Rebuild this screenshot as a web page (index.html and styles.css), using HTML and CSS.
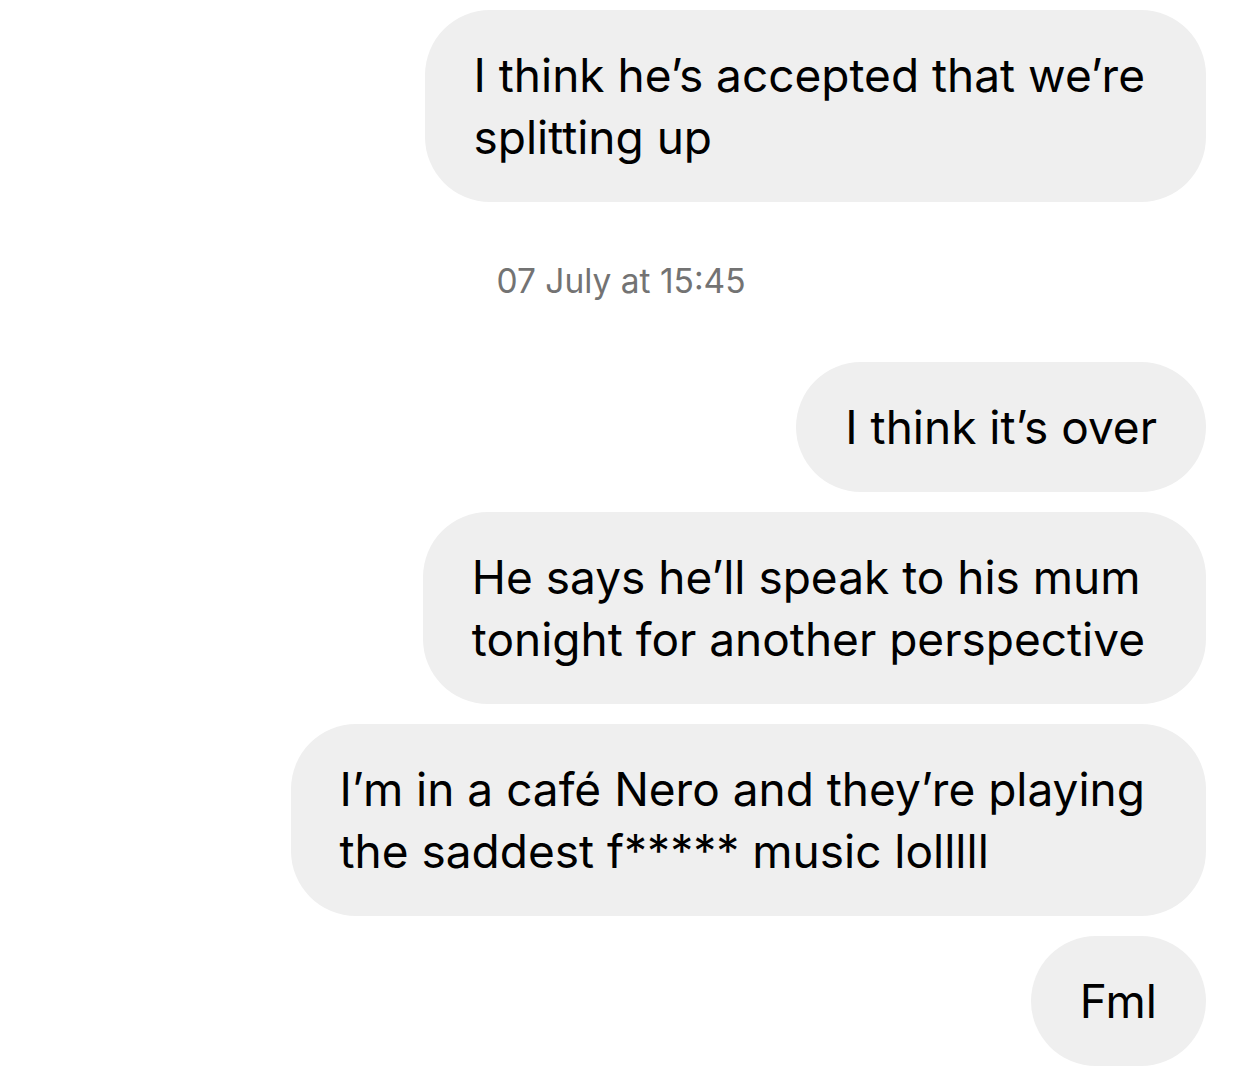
FILE: index.html
```html
<!DOCTYPE html>
<html lang="en">
  <head>
    <meta charset="UTF-8" />
    <meta name="viewport" content="width=device-width, initial-scale=1.0" />
    <title>Messages</title>
    <link rel="stylesheet" href="styles.css">
  </head>
  <body>
    <div class="thread">
      <div class="bubble multi">I think he’s accepted that we’re<br />splitting up</div>

      <p class="stamp">07 July at 15:45</p>

      <div class="bubble">I think it’s over</div>
      <div class="bubble multi">He says he’ll speak to his mum<br />tonight for another perspective</div>
      <div class="bubble multi">I’m in a café Nero and they’re playing<br />the saddest f***** music lolllll</div>
      <div class="bubble">Fml</div>
    </div>
  </body>
</html>
```

FILE: styles.css
```css
body {
  margin: 0;
  background: #fff;
  font-family: Inter, "Liberation Sans", sans-serif;
}

.thread {
  display: flex;
  flex-direction: column;
  align-items: flex-end;
  gap: 20px;
  padding: 10px 36px 0 0;
}

.bubble {
  padding: 34px 49px;
  background-color: #efefef;
  border-radius: 65px;
  color: #000;
  font-size: 46px;
  line-height: 62px;
  white-space: nowrap;
}

.bubble.multi {
  padding-right: 61px;
}

.stamp {
  align-self: center;
  margin: 39px 0 41px 36px;
  color: #737373;
  font-size: 33.5px;
  line-height: 40px;
}
```
